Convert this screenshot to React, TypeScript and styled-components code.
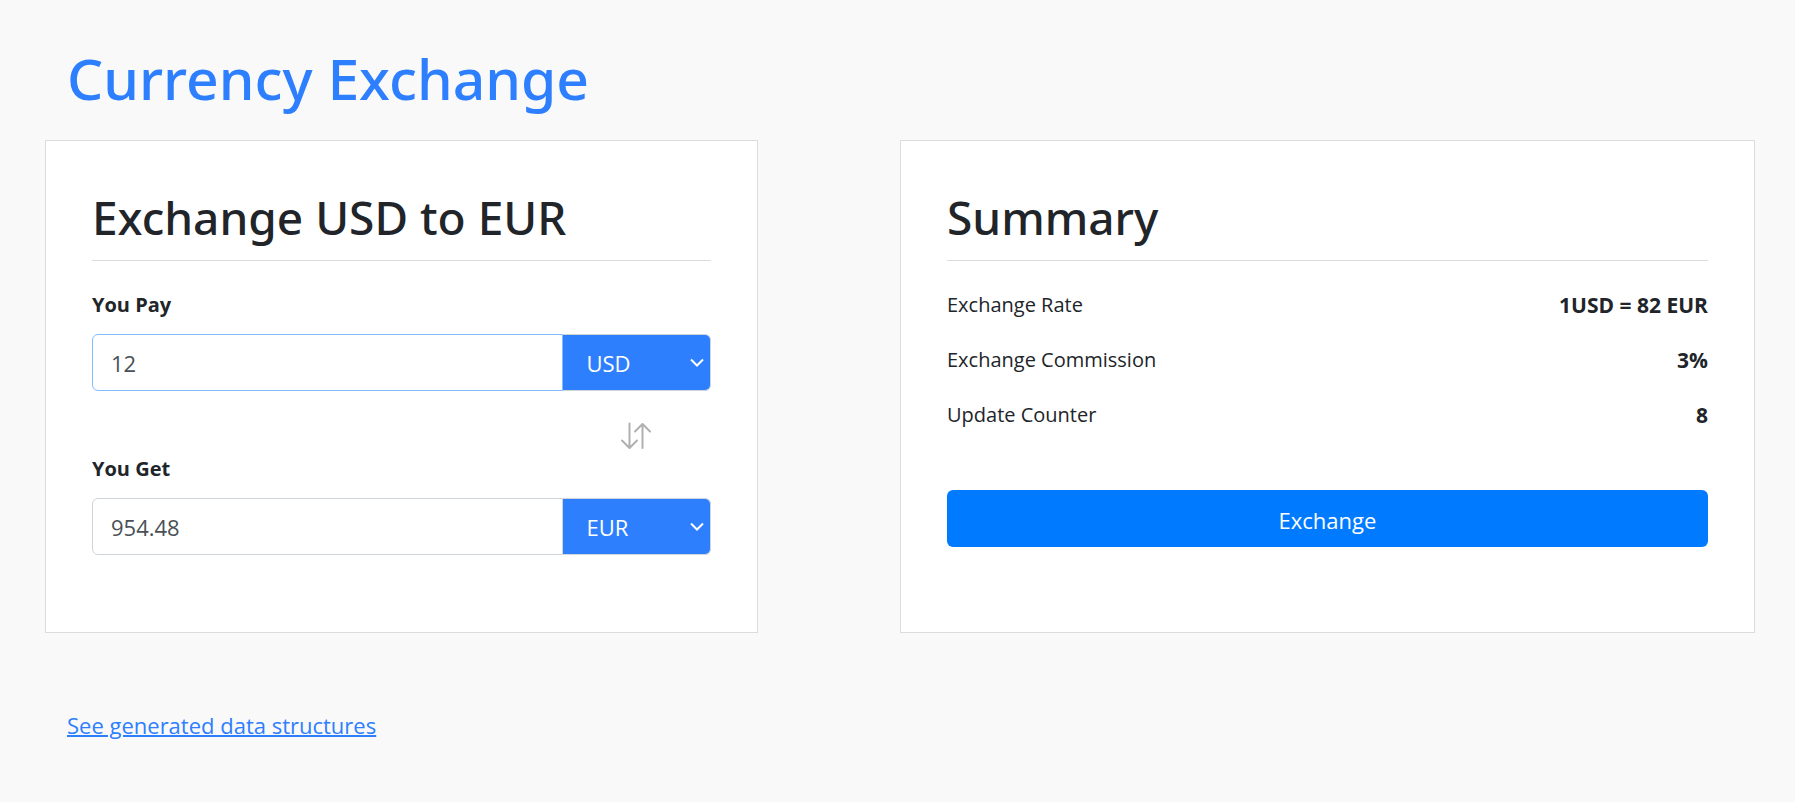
import React, { useState } from "react";
import styled, { createGlobalStyle } from "styled-components";

const blue = "#2d7ffe";
const line = "#dcdcdc";
const headingFont = `"Segoe UI", "Noto Sans", "Open Sans", sans-serif`;

const GlobalStyle = createGlobalStyle`
  *, *::before, *::after { box-sizing: border-box; }
  body {
    margin: 0;
    background: #f9f9f9;
    color: #212529;
    font-family: "Segoe UI", "Open Sans", "Noto Sans", sans-serif;
    font-size: 20px;
    line-height: 30px;
  }
`;

const Page = styled.main`
  padding: 42px 40px 44px 45px;
`;

const Title = styled.h1`
  margin: 0 0 26px;
  padding-left: 22px;
  color: ${blue};
  font-family: ${headingFont};
  font-size: 57px;
  font-weight: 500;
  line-height: 72px;
`;

const Columns = styled.div`
  display: grid;
  grid-template-columns: 5fr 6fr;
  column-gap: 8.3333%;
`;

const Card = styled.section`
  min-width: 0;
  padding: 44px 46px 77px;
  border: 1px solid ${line};
  background: #fff;
`;

const Heading = styled.h2`
  margin: 0 0 29px;
  padding-bottom: 11px;
  border-bottom: 1px solid ${line};
  font-family: ${headingFont};
  font-size: 46px;
  font-weight: 500;
  line-height: 64px;
`;

const FieldLabel = styled.label`
  display: block;
  margin-bottom: 14px;
  font-weight: 700;
`;

const Group = styled.div`
  display: flex;
  height: 57px;
`;

const Amount = styled.input<{ $active?: boolean }>`
  flex: 1;
  min-width: 0;
  padding: 1px 18px 0;
  border: 1px solid ${(p) => (p.$active ? "#80bdff" : "#ced4da")};
  border-radius: 6px 0 0 6px;
  background: #fff;
  color: #495057;
  font: inherit;
  font-size: 22px;
  outline: none;
`;

const SelectBox = styled.div`
  display: grid;
  width: 148px;
  align-items: center;
`;

const Currency = styled.select`
  grid-area: 1 / 1;
  width: 100%;
  height: 100%;
  padding: 1px 24px 0;
  border: 1px solid #ced4da;
  border-left: 0;
  border-radius: 0 6px 6px 0;
  appearance: none;
  background: ${blue};
  color: #fff;
  font: inherit;
  font-size: 22px;
`;

const Chevron = styled.svg`
  grid-area: 1 / 1;
  justify-self: end;
  margin-right: 6px;
  pointer-events: none;
`;

const SwapRow = styled.div`
  display: flex;
  justify-content: flex-end;
  height: 63px;
  padding: 31px 59px 0 0;
`;

const SwapButton = styled.button`
  width: 32px;
  height: 30px;
  padding: 0;
  border: 0;
  background: none;
  cursor: pointer;
`;

const Facts = styled.dl`
  margin: 0 0 60px;
`;

const Fact = styled.div`
  display: flex;
  justify-content: space-between;
  & + & { margin-top: 25px; }
`;

const Value = styled.dd`
  margin: 0;
  font-size: 21px;
  font-weight: 700;
`;

const Submit = styled.button`
  display: block;
  width: 100%;
  height: 57px;
  padding: 2px 0 0;
  border: 0;
  border-radius: 6px;
  background: #007bff;
  color: #fff;
  font: inherit;
  font-size: 22px;
  cursor: pointer;
`;

const DataLink = styled.a`
  display: inline-block;
  margin: 77px 0 0 22px;
  color: ${blue};
  font-size: 22px;
  text-decoration: underline;
  text-decoration-thickness: 2px;
`;

const currencies = ["USD", "EUR"];

type FieldProps = {
  id: string;
  label: string;
  amount: string;
  currency: string;
  active?: boolean;
  onAmount: (value: string) => void;
  onCurrency: (value: string) => void;
};

function MoneyField({ id, label, amount, currency, active, onAmount, onCurrency }: FieldProps) {
  return (
    <div>
      <FieldLabel htmlFor={id}>{label}</FieldLabel>
      <Group>
        <Amount id={id} $active={active} value={amount} onChange={(e) => onAmount(e.target.value)} />
        <SelectBox>
          <Currency
            aria-label={`${label} currency`}
            value={currency}
            onChange={(e) => onCurrency(e.target.value)}
          >
            {currencies.map((c) => (
              <option key={c}>{c}</option>
            ))}
          </Currency>
          <Chevron width="16" height="12" viewBox="0 0 16 12" fill="none" aria-hidden="true">
            <path d="M2 2.5l6 6 6-6" stroke="#fff" strokeWidth="2" />
          </Chevron>
        </SelectBox>
      </Group>
    </div>
  );
}

export default function App() {
  const [pay, setPay] = useState("12");
  const [get, setGet] = useState("954.48");
  const [from, setFrom] = useState("USD");
  const [to, setTo] = useState("EUR");

  const swap = () => {
    setFrom(to);
    setTo(from);
  };

  const facts = [
    ["Exchange Rate", `1${from} = 82 ${to}`],
    ["Exchange Commission", "3%"],
    ["Update Counter", "8"],
  ];

  return (
    <>
      <GlobalStyle />
      <Page>
        <Title>Currency Exchange</Title>
        <Columns>
          <Card>
            <Heading>{`Exchange ${from} to ${to}`}</Heading>
            <MoneyField id="pay" label="You Pay" amount={pay} currency={from} active onAmount={setPay} onCurrency={setFrom} />
            <SwapRow>
              <SwapButton type="button" aria-label="Swap currencies" onClick={swap}>
                <svg width="32" height="28" viewBox="0 0 32 28" fill="none" stroke="#b0b0b0" strokeWidth="2" strokeLinecap="round" strokeLinejoin="round">
                  <path d="M9.500 1.500v24M2 18.500l7.500 7.500 7.500-7.500" />
                  <path d="M22.500 26V2M15 9.500L22.500 2 30 9.500" />
                </svg>
              </SwapButton>
            </SwapRow>
            <MoneyField id="get" label="You Get" amount={get} currency={to} onAmount={setGet} onCurrency={setTo} />
          </Card>
          <Card>
            <Heading>Summary</Heading>
            <Facts>
              {facts.map(([name, value]) => (
                <Fact key={name}>
                  <dt>{name}</dt>
                  <Value>{value}</Value>
                </Fact>
              ))}
            </Facts>
            <Submit type="button">Exchange</Submit>
          </Card>
        </Columns>
        <DataLink href="#data">See generated data structures</DataLink>
      </Page>
    </>
  );
}
